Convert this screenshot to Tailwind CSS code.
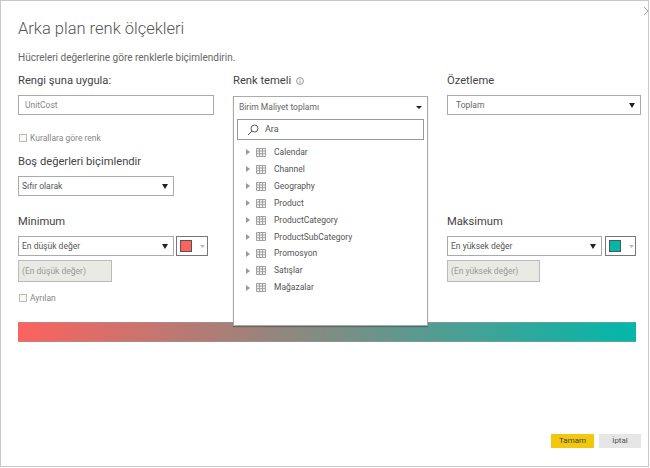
<!DOCTYPE html>
<html lang="tr">
<head>
    <meta charset="UTF-8">
    <title>Arka plan renk ölçekleri</title>
    <script src="https://cdn.jsdelivr.net/npm/@tailwindcss/browser@4"></script>
</head>
<body class="bg-white overflow-hidden">

    <div class="relative w-[649px] h-[467px] bg-white border border-[#c8c8c8] overflow-hidden font-['Roboto','Noto_Sans',sans-serif] text-[#444]">

        <!-- close -->
        <svg class="absolute right-[-4px] top-[6px] w-2 h-2 text-[#999]" viewBox="0 0 8 8"><path d="M0 0L8 8M8 0L0 8" stroke="currentColor" fill="none"/></svg>

        <div class="pl-[17px] pt-[16px] flex flex-col h-full">
            <h1 class="text-[16.5px] leading-[24px] font-light text-[#555]">Arka plan renk ölçekleri</h1>
            <p class="mt-[10px] text-[10px] leading-[14px] text-[#666]">Hücreleri değerlerine göre renklerle biçimlendirin.</p>

            <div class="mt-[8px] grid grid-cols-[215px_214px_1fr]">
                <!-- left column -->
                <div class="flex flex-col">
                    <label class="text-[11.2px] leading-[16px] h-[16px] text-[#444]">Rengi şuna uygula:</label>
                    <div class="mt-[6px] w-[196px] h-[20px] border border-[#aaa] px-[6px] flex items-center text-[8.5px] text-[#888]">UnitCost</div>
                    <div class="mt-[16px] flex items-center gap-[3px] h-[14px] text-[8.5px] text-[#888]">
                        <span class="w-[8px] h-[8px] ml-[1px] border border-[#bbb] bg-[#f8f8f4]"></span>
                        Kurallara göre renk
                    </div>
                    <label class="mt-[9px] text-[11.2px] leading-[16px] text-[#444]">Boş değerleri biçimlendir</label>
                    <div class="mt-[6px] w-[156px] h-[20px] border border-[#aaa] pl-[3px] pr-[5px] flex items-center justify-between text-[8.5px] text-[#555]">
                        Sıfır olarak
                        <svg class="w-[6px] h-[5px]" viewBox="0 0 6 5"><path d="M0 0H6L3 5Z" fill="#222"/></svg>
                    </div>
                    <label class="mt-[18px] text-[11.2px] leading-[16px] text-[#444]">Minimum</label>
                    <div class="mt-[6px] flex gap-[2px]">
                        <div class="w-[156px] h-[20px] border border-[#aaa] pl-[3px] pr-[5px] flex items-center justify-between text-[8.5px] text-[#555]">
                            En düşük değer
                            <svg class="w-[6px] h-[5px]" viewBox="0 0 6 5"><path d="M0 0H6L3 5Z" fill="#222"/></svg>
                        </div>
                        <div class="w-[32px] h-[20px] border border-[#777] flex items-center pl-[3px] gap-[8px]">
                            <span class="w-[12px] h-[12px] bg-[#fd625e] border border-[#555]"></span>
                            <svg class="w-[5px] h-[3px]" viewBox="0 0 5 3"><path d="M0 0H5L2.5 3Z" fill="#bbb"/></svg>
                        </div>
                    </div>
                    <div class="mt-[4px] w-[94px] h-[22px] bg-[#eaeae5] border border-[#bbb] px-[3px] flex items-center text-[8.5px] text-[#999]">(En düşük değer)</div>
                    <div class="mt-[9px] flex items-center gap-[3px] h-[14px] text-[8.5px] text-[#888]">
                        <span class="w-[8px] h-[8px] ml-[1px] border border-[#bbb] bg-[#f8f8f4]"></span>
                        Ayrılan
                    </div>
                </div>

                <!-- middle column with open dropdown -->
                <div class="relative flex flex-col">
                    <label class="text-[11.2px] leading-[16px] h-[16px] text-[#444] flex items-center gap-[5px]">
                        Renk temeli
                        <svg class="w-[8px] h-[8px]" viewBox="0 0 8 8"><circle cx="4" cy="4" r="3.4" fill="none" stroke="#777" stroke-width="0.8"/><path d="M4 3.4V6M4 2V2.8" stroke="#777" stroke-width="0.8"/></svg>
                    </label>
                    <div class="absolute left-0 top-[23px] z-10 w-[195px] h-[230px] bg-white border border-[#aaa] shadow-[0_1px_1px_rgba(0,0,0,0.25)]">
                        <div class="h-[22px] pb-[1px] pl-[5px] pr-[5px] flex items-center justify-between text-[8.5px] text-[#666]">
                            Birim Maliyet toplamı
                            <svg class="w-[6px] h-[3px]" viewBox="0 0 6 3"><path d="M0 0H6L3 3Z" fill="#222"/></svg>
                        </div>
                        <div class="mx-[3px] h-[21px] border border-[#999] flex items-center pl-[9px] gap-[6px] text-[9px] text-[#555]">
                            <svg class="w-[12px] h-[12px]" viewBox="0 0 12 12"><circle cx="7.5" cy="4.5" r="3.5" fill="none" stroke="#555"/><path d="M5 7L1 11" stroke="#555"/></svg>
                            Ara
                        </div>
                        <ul class="mt-[4px] flex flex-col text-[8.5px] text-[#555]">
                            <li class="h-[16.9px] flex items-center pl-[12px]"><svg class="w-[4px] h-[6px] text-[#999]" viewBox="0 0 4 6"><path d="M0 0L4 3L0 6Z" fill="currentColor"/></svg><svg class="ml-[6px] w-[10px] h-[9px]" viewBox="0 0 10 9"><path d="M.5.5H9.5V8.5H.5ZM.5 3H9.5M.5 5.7H9.5M3.5.5V8.5M6.5.5V8.5" fill="#f4f4f4" stroke="#a0a0a0" stroke-width="1"/></svg><span class="ml-[8px]">Calendar</span></li>
                            <li class="h-[16.9px] flex items-center pl-[12px]"><svg class="w-[4px] h-[6px] text-[#999]" viewBox="0 0 4 6"><path d="M0 0L4 3L0 6Z" fill="currentColor"/></svg><svg class="ml-[6px] w-[10px] h-[9px]" viewBox="0 0 10 9"><path d="M.5.5H9.5V8.5H.5ZM.5 3H9.5M.5 5.7H9.5M3.5.5V8.5M6.5.5V8.5" fill="#f4f4f4" stroke="#a0a0a0" stroke-width="1"/></svg><span class="ml-[8px]">Channel</span></li>
                            <li class="h-[16.9px] flex items-center pl-[12px]"><svg class="w-[4px] h-[6px] text-[#999]" viewBox="0 0 4 6"><path d="M0 0L4 3L0 6Z" fill="currentColor"/></svg><svg class="ml-[6px] w-[10px] h-[9px]" viewBox="0 0 10 9"><path d="M.5.5H9.5V8.5H.5ZM.5 3H9.5M.5 5.7H9.5M3.5.5V8.5M6.5.5V8.5" fill="#f4f4f4" stroke="#a0a0a0" stroke-width="1"/></svg><span class="ml-[8px]">Geography</span></li>
                            <li class="h-[16.9px] flex items-center pl-[12px]"><svg class="w-[4px] h-[6px] text-[#999]" viewBox="0 0 4 6"><path d="M0 0L4 3L0 6Z" fill="currentColor"/></svg><svg class="ml-[6px] w-[10px] h-[9px]" viewBox="0 0 10 9"><path d="M.5.5H9.5V8.5H.5ZM.5 3H9.5M.5 5.7H9.5M3.5.5V8.5M6.5.5V8.5" fill="#f4f4f4" stroke="#a0a0a0" stroke-width="1"/></svg><span class="ml-[8px]">Product</span></li>
                            <li class="h-[16.9px] flex items-center pl-[12px]"><svg class="w-[4px] h-[6px] text-[#999]" viewBox="0 0 4 6"><path d="M0 0L4 3L0 6Z" fill="currentColor"/></svg><svg class="ml-[6px] w-[10px] h-[9px]" viewBox="0 0 10 9"><path d="M.5.5H9.5V8.5H.5ZM.5 3H9.5M.5 5.7H9.5M3.5.5V8.5M6.5.5V8.5" fill="#f4f4f4" stroke="#a0a0a0" stroke-width="1"/></svg><span class="ml-[8px]">ProductCategory</span></li>
                            <li class="h-[16.9px] flex items-center pl-[12px]"><svg class="w-[4px] h-[6px] text-[#999]" viewBox="0 0 4 6"><path d="M0 0L4 3L0 6Z" fill="currentColor"/></svg><svg class="ml-[6px] w-[10px] h-[9px]" viewBox="0 0 10 9"><path d="M.5.5H9.5V8.5H.5ZM.5 3H9.5M.5 5.7H9.5M3.5.5V8.5M6.5.5V8.5" fill="#f4f4f4" stroke="#a0a0a0" stroke-width="1"/></svg><span class="ml-[8px]">ProductSubCategory</span></li>
                            <li class="h-[16.9px] flex items-center pl-[12px]"><svg class="w-[4px] h-[6px] text-[#999]" viewBox="0 0 4 6"><path d="M0 0L4 3L0 6Z" fill="currentColor"/></svg><svg class="ml-[6px] w-[10px] h-[9px]" viewBox="0 0 10 9"><path d="M.5.5H9.5V8.5H.5ZM.5 3H9.5M.5 5.7H9.5M3.5.5V8.5M6.5.5V8.5" fill="#f4f4f4" stroke="#a0a0a0" stroke-width="1"/></svg><span class="ml-[8px]">Promosyon</span></li>
                            <li class="h-[16.9px] flex items-center pl-[12px]"><svg class="w-[4px] h-[6px] text-[#999]" viewBox="0 0 4 6"><path d="M0 0L4 3L0 6Z" fill="currentColor"/></svg><svg class="ml-[6px] w-[10px] h-[9px]" viewBox="0 0 10 9"><path d="M.5.5H9.5V8.5H.5ZM.5 3H9.5M.5 5.7H9.5M3.5.5V8.5M6.5.5V8.5" fill="#f4f4f4" stroke="#a0a0a0" stroke-width="1"/></svg><span class="ml-[8px]">Satışlar</span></li>
                            <li class="h-[16.9px] flex items-center pl-[12px]"><svg class="w-[4px] h-[6px] text-[#999]" viewBox="0 0 4 6"><path d="M0 0L4 3L0 6Z" fill="currentColor"/></svg><svg class="ml-[6px] w-[10px] h-[9px]" viewBox="0 0 10 9"><path d="M.5.5H9.5V8.5H.5ZM.5 3H9.5M.5 5.7H9.5M3.5.5V8.5M6.5.5V8.5" fill="#f4f4f4" stroke="#a0a0a0" stroke-width="1"/></svg><span class="ml-[8px]">Mağazalar</span></li>
                        </ul>
                    </div>
                </div>

                <!-- right column -->
                <div class="flex flex-col">
                    <label class="text-[11.2px] leading-[16px] h-[16px] text-[#444]">Özetleme</label>
                    <div class="mt-[6px] w-[194px] h-[20px] border border-[#aaa] pl-[8px] pr-[5px] flex items-center justify-between text-[8.5px] text-[#666]">
                        Toplam
                        <svg class="w-[6px] h-[5px]" viewBox="0 0 6 5"><path d="M0 0H6L3 5Z" fill="#222"/></svg>
                    </div>
                    <label class="mt-[99px] text-[11.2px] leading-[16px] text-[#444]">Maksimum</label>
                    <div class="mt-[6px] flex gap-[3px]">
                        <div class="w-[155px] h-[20px] border border-[#aaa] pl-[3px] pr-[5px] flex items-center justify-between text-[8.5px] text-[#555]">
                            En yüksek değer
                            <svg class="w-[6px] h-[5px]" viewBox="0 0 6 5"><path d="M0 0H6L3 5Z" fill="#222"/></svg>
                        </div>
                        <div class="w-[31px] h-[20px] border border-[#777] flex items-center pl-[3px] gap-[8px]">
                            <span class="w-[12px] h-[12px] bg-[#01b8aa] border border-[#555]"></span>
                            <svg class="w-[5px] h-[3px]" viewBox="0 0 5 3"><path d="M0 0H5L2.5 3Z" fill="#bbb"/></svg>
                        </div>
                    </div>
                    <div class="mt-[4px] w-[93px] h-[22px] bg-[#eaeae5] border border-[#bbb] px-[3px] flex items-center text-[8.5px] text-[#999]">(En yüksek değer)</div>
                </div>
            </div>

            <!-- gradient preview -->
            <div class="mt-[17px] w-[618px] h-[20px] bg-[linear-gradient(to_right,#fd625e,#01b8aa)] border-t border-b border-[#999]/60"></div>

            <!-- footer buttons -->
            <div class="mt-auto mb-[18px] pr-[7px] flex justify-end gap-[5px]">
                <button class="w-[43px] h-[14px] bg-[#f2c80f] text-[8px] leading-[14px] text-[#444]">Tamam</button>
                <button class="w-[42px] h-[14px] bg-[#e6e6e6] text-[8px] leading-[14px] text-[#555]">İptal</button>
            </div>
        </div>
    </div>

</body>
</html>
